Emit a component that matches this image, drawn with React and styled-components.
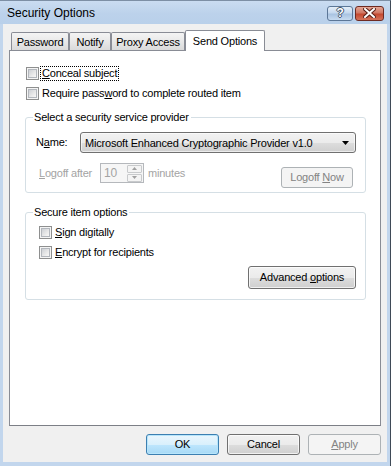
import React from "react";
import styled, { createGlobalStyle, css } from "styled-components";

const GlobalStyle = createGlobalStyle`
  html, body { margin: 0; padding: 0; background: #fff; }
  body { font-family: "Liberation Sans", Arial, sans-serif; font-size: 11px; color: #000; letter-spacing: -0.2px; }
  * { box-sizing: border-box; }
`;

const Window = styled.div`
  width: 391px;
  height: 466px;
  display: flex;
  flex-direction: column;
  background: #c2d6ed;
  border-top: 1px solid #7d8fa5;
  border-right: 1px solid #3f4a57;
`;

const TitleBar = styled.div`
  height: 23px;
  display: flex;
  align-items: center;
  justify-content: space-between;
  padding: 0 6px 0 7px;
  background: linear-gradient(#cadcf1, #bcd2eb 55%, #b9d0ea);
`;

const TitleText = styled.span`
  font-size: 12px;
  letter-spacing: 0;
  color: #000;
  margin-top: 1px;
`;

const CaptionButtons = styled.div`
  display: flex;
  gap: 2px;
  margin-top: 1px;
`;

const CaptionButton = styled.div`
  height: 15px;
  width: ${(p) => (p.$close ? 29 : 26)}px;
  border-radius: 3px;
  display: flex;
  align-items: center;
  justify-content: center;
  ${(p) =>
    p.$close
      ? css`
          border: 1px solid #6e2a22;
          background: linear-gradient(#e3a595, #d07763 45%, #c4482f 55%, #d4735b);
        `
      : css`
          border: 1px solid #5c7797;
          background: linear-gradient(#e4eef9, #c5d8ee 45%, #a9c3e1 55%, #c7dbf0);
        `}
`;

const HelpGlyph = styled.span`
  font-family: "Liberation Sans", Arial, sans-serif;
  font-weight: bold;
  font-size: 12px;
  line-height: 1;
  color: #fff;
  text-shadow: 1px 0 0 #44546a, -1px 0 0 #44546a, 0 1px 0 #44546a, 0 -1px 0 #44546a;
`;

const Client = styled.div`
  flex: 1;
  margin: 0 3px 4px 3px;
  background: #f0f0f0;
  padding: 6px 6px 7px 6px;
  display: flex;
  flex-direction: column;
`;

const TabStrip = styled.div`
  height: 20px;
  display: flex;
  align-items: flex-end;
  padding-left: 2px;
  position: relative;
  z-index: 1;
`;

const Tab = styled.div`
  width: ${(p) => p.$w}px;
  display: flex;
  justify-content: center;
  border: 1px solid #898c95;
  border-bottom: none;
  border-radius: 2px 2px 0 0;
  ${(p) =>
    p.$active
      ? css`
          height: 21px;
          margin-bottom: -1px;
          background: #fff;
          align-items: center;
          padding-bottom: 1px;
        `
      : css`
          height: 18px;
          background: linear-gradient(#f4f4f4, #e8e8e8 50%, #dadada);
          align-items: center;
          padding-top: 1px;
        `}
`;

const Panel = styled.div`
  flex: 1;
  background: #fff;
  border: 1px solid #898c95;
  border-bottom-color: #7c7f86;
  padding: 12px 14px 0 15px;
  display: flex;
  flex-direction: column;
`;

const CheckRow = styled.div`
  height: 20px;
  display: flex;
  align-items: center;
`;

const CheckBox = styled.span`
  width: 13px;
  height: 13px;
  flex: none;
  border: 1px solid #8e8f8f;
  background: #f4f4f4;
  position: relative;
  margin-left: 1px;
  &::after {
    content: "";
    position: absolute;
    inset: 1px;
    border: 1px solid #b3b7bd;
    background: linear-gradient(135deg, #cdd0d5, #e9e9e9 60%, #f7f7f7);
  }
`;

const CheckLabel = styled.span`
  margin-left: 1px;
  padding: 0 1px;
  line-height: 13px;
  border: 1px dotted ${(p) => (p.$focus ? "#000" : "transparent")};
`;

const U = styled.span`
  text-decoration: underline;
  text-underline-offset: 1px;
`;

const GroupBox = styled.div`
  position: relative;
  margin-top: ${(p) => p.$mt}px;
  border: 1px solid #d5dfe5;
  border-radius: 3px;
  padding: ${(p) => p.$pad};
  display: flex;
  flex-direction: column;
`;

const GroupLegend = styled.span`
  position: absolute;
  top: -7px;
  left: 7px;
  padding: 0 2px 0 1px;
  background: #fff;
  line-height: 13px;
`;

const FieldRow = styled.div`
  display: flex;
  align-items: ${(p) => p.$align || "center"};
  margin-top: ${(p) => p.$mt || 0}px;
`;

const FieldLabel = styled.span`
  width: ${(p) => p.$w}px;
  flex: none;
  margin-left: ${(p) => p.$ml || 0}px;
  color: ${(p) => (p.$disabled ? "#a3a3a3" : "#000")};
  line-height: ${(p) => p.$lh || 13}px;
`;

const Combo = styled.div`
  width: 276px;
  height: 21px;
  border: 1px solid #707070;
  border-radius: 3px;
  background: linear-gradient(#f2f2f2, #ebebeb 50%, #dddddd 51%, #cfcfcf);
  box-shadow: inset 0 0 0 1px rgba(255, 255, 255, 0.6);
  display: flex;
  align-items: center;
  justify-content: space-between;
  padding: 0 6px 0 4px;
`;

const SpinField = styled.div`
  width: 44px;
  height: 20px;
  border: 1px solid #b5b8bc;
  background: #f6f6f6;
  display: flex;
  align-items: center;
  justify-content: space-between;
  padding: 0 1px 0 3px;
  color: #a3a3a3;
  font-size: 12px;
`;

const Spinner = styled.div`
  width: 15px;
  display: flex;
  flex-direction: column;
  gap: 1px;
`;

const SpinBtn = styled.div`
  height: 8px;
  border: 1px solid #c8cacc;
  border-radius: 1px;
  background: #f4f4f4;
  display: flex;
  align-items: center;
  justify-content: center;
`;

const Spacer = styled.div`
  flex: 1;
`;

const PushButton = styled.div`
  width: ${(p) => p.$w}px;
  height: ${(p) => p.$h}px;
  flex: none;
  margin-top: ${(p) => p.$mt || 0}px;
  margin-right: ${(p) => p.$mr || 0}px;
  border-radius: 3px;
  display: flex;
  align-items: center;
  justify-content: center;
  padding-bottom: 1px;
  ${(p) =>
    p.$variant === "disabled"
      ? css`
          border: 1px solid #adb2b5;
          background: #f4f4f4;
          color: #838383;
        `
      : p.$variant === "default"
      ? css`
          border: 1px solid #3c7fb1;
          background: linear-gradient(#eaf6fd, #d9f0fc 50%, #bee6fd 51%, #a7d9f5);
          box-shadow: inset 0 0 0 1px #b7e5fb;
          color: #000;
        `
      : css`
          border: 1px solid #707070;
          background: linear-gradient(#f2f2f2, #ebebeb 50%, #dddddd 51%, #cfcfcf);
          box-shadow: inset 0 0 0 1px rgba(255, 255, 255, 0.7);
          color: #000;
        `}
`;

const ButtonRow = styled.div`
  display: flex;
  justify-content: flex-end;
  gap: 8px;
  margin-top: 8px;
`;

const Arrow = ({ up, color = "#000", w = 7, h = 4 }) => (
  <svg width={w} height={h} viewBox={`0 0 ${w} ${h}`}>
    {up ? (
      <polygon points={`0,${h} ${w},${h} ${w / 2},0`} fill={color} />
    ) : (
      <polygon points={`0,0 ${w},0 ${w / 2},${h}`} fill={color} />
    )}
  </svg>
);

export default function App() {
  return (
    <>
      <GlobalStyle />
      <Window>
        <TitleBar>
          <TitleText>Security Options</TitleText>
          <CaptionButtons>
            <CaptionButton>
              <HelpGlyph>?</HelpGlyph>
            </CaptionButton>
            <CaptionButton $close>
              <svg width="13" height="10" viewBox="0 0 13 10">
                <path d="M2 1 L11 9 M11 1 L2 9" stroke="#5a2119" strokeWidth="4" strokeLinecap="square" />
                <path d="M2 1 L11 9 M11 1 L2 9" stroke="#fff" strokeWidth="2" strokeLinecap="square" />
              </svg>
            </CaptionButton>
          </CaptionButtons>
        </TitleBar>
        <Client>
          <TabStrip>
            <Tab $w={58}>Password</Tab>
            <Tab $w={42}>Notify</Tab>
            <Tab $w={74}>Proxy Access</Tab>
            <Tab $w={80} $active>Send Options</Tab>
          </TabStrip>
          <Panel>
            <CheckRow>
              <CheckBox />
              <CheckLabel $focus>
                <U>C</U>onceal subject
              </CheckLabel>
            </CheckRow>
            <CheckRow>
              <CheckBox />
              <CheckLabel>
                Require pass<U>w</U>ord to complete routed item
              </CheckLabel>
            </CheckRow>

            <GroupBox $mt={14} $pad="14px 8px 4px 10px">
              <GroupLegend>Select a security service provider</GroupLegend>
              <FieldRow>
                <FieldLabel $w={44}>
                  N<U>a</U>me:
                </FieldLabel>
                <Combo>
                  <span>Microsoft Enhanced Cryptographic Provider v1.0</span>
                  <Arrow />
                </Combo>
              </FieldRow>
              <FieldRow $mt={10} $align="flex-start">
                <FieldLabel $w={61} $ml={3} $disabled $lh={20}>
                  <U>L</U>ogoff after
                </FieldLabel>
                <SpinField>
                  <span>10</span>
                  <Spinner>
                    <SpinBtn>
                      <Arrow up color="#a0a0a0" w={5} h={3} />
                    </SpinBtn>
                    <SpinBtn>
                      <Arrow color="#a0a0a0" w={5} h={3} />
                    </SpinBtn>
                  </Spinner>
                </SpinField>
                <FieldLabel $w={50} $ml={4} $disabled $lh={20}>
                  minutes
                </FieldLabel>
                <Spacer />
                <PushButton $w={72} $h={21} $mt={4} $mr={4} $variant="disabled">
                  <span>
                    Logoff <U>N</U>ow
                  </span>
                </PushButton>
              </FieldRow>
            </GroupBox>

            <GroupBox $mt={19} $pad="9px 9px 10px 12px">
              <GroupLegend>Secure item options</GroupLegend>
              <CheckRow>
                <CheckBox />
                <CheckLabel>
                  <U>S</U>ign digitally
                </CheckLabel>
              </CheckRow>
              <CheckRow>
                <CheckBox />
                <CheckLabel>
                  <U>E</U>ncrypt for recipients
                </CheckLabel>
              </CheckRow>
              <FieldRow $mt={4} $align="flex-start">
                <Spacer />
                <PushButton $w={108} $h={23}>
                  <span>
                    Advanced <U>o</U>ptions
                  </span>
                </PushButton>
              </FieldRow>
            </GroupBox>
          </Panel>
          <ButtonRow>
            <PushButton $w={73} $h={21} $variant="default">OK</PushButton>
            <PushButton $w={73} $h={21}>Cancel</PushButton>
            <PushButton $w={73} $h={21} $variant="disabled">
              <span>
                <U>A</U>pply
              </span>
            </PushButton>
          </ButtonRow>
        </Client>
      </Window>
    </>
  );
}
